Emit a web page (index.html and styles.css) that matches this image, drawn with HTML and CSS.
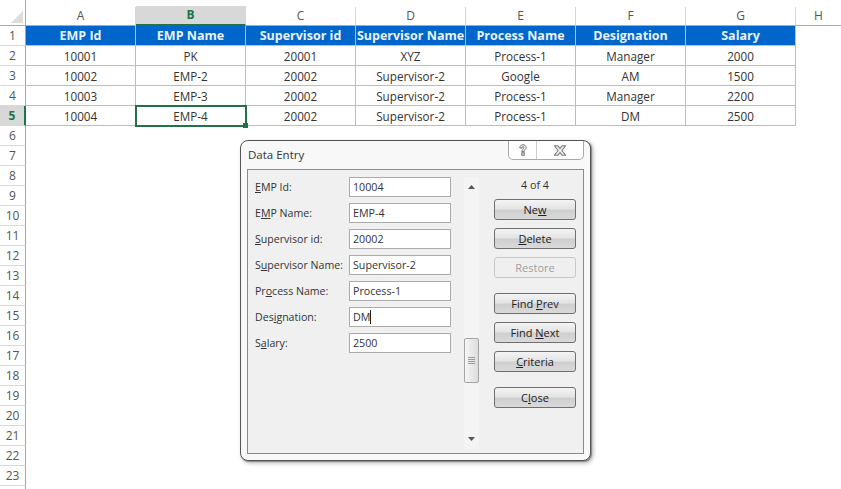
FILE: index.html
```html
<!DOCTYPE html>
<html lang="en">
<head>
<meta charset="utf-8">
<title>Data Entry</title>
<link rel="stylesheet" href="styles.css">
</head>
<body>
<div class="sheet">
  <div class="corner"><svg width="14" height="14" viewBox="0 0 14 14"><path d="M1 13H13V1Z" fill="#dcdcdc"/></svg></div>
  <div class="ch">A</div><div class="ch sel">B</div><div class="ch">C</div><div class="ch">D</div><div class="ch">E</div><div class="ch">F</div><div class="ch">G</div><div class="ch last">H</div>

  <div class="rh">1</div>
  <div class="th">EMP Id</div><div class="th">EMP Name</div><div class="th">Supervisor id</div><div class="th">Supervisor Name</div><div class="th">Process Name</div><div class="th">Designation</div><div class="th">Salary</div><div class="gap"></div>

  <div class="rh">2</div>
  <div class="td">10001</div><div class="td">PK</div><div class="td">20001</div><div class="td">XYZ</div><div class="td">Process-1</div><div class="td">Manager</div><div class="td">2000</div><div class="gap"></div>

  <div class="rh">3</div>
  <div class="td">10002</div><div class="td">EMP-2</div><div class="td">20002</div><div class="td">Supervisor-2</div><div class="td">Google</div><div class="td">AM</div><div class="td">1500</div><div class="gap"></div>

  <div class="rh">4</div>
  <div class="td">10003</div><div class="td">EMP-3</div><div class="td">20002</div><div class="td">Supervisor-2</div><div class="td">Process-1</div><div class="td">Manager</div><div class="td">2200</div><div class="gap"></div>

  <div class="rh sel-row">5</div>
  <div class="td">10004</div><div class="td active">EMP-4<span class="handle"></span></div><div class="td">20002</div><div class="td">Supervisor-2</div><div class="td">Process-1</div><div class="td">DM</div><div class="td">2500</div><div class="gap"></div>

  <div class="rh">6</div><div class="rh">7</div><div class="rh">8</div><div class="rh">9</div><div class="rh">10</div><div class="rh">11</div><div class="rh">12</div><div class="rh">13</div><div class="rh">14</div><div class="rh">15</div><div class="rh">16</div><div class="rh">17</div><div class="rh">18</div><div class="rh">19</div><div class="rh">20</div><div class="rh">21</div><div class="rh">22</div><div class="rh">23</div><div class="rh"></div>
</div>

<div class="dialog">
  <div class="titlebar">
    <span class="title">Data Entry</span>
    <div class="winbtns">
      <div class="winbtn help">
        <svg width="8" height="12" viewBox="0 0 10 14" fill="none" stroke="#666" stroke-width="1.200"><path d="M1 4.500C1 2 2.800 .5 5 .5S9 2 9 4C9 6 6.500 6.500 6.500 9H3.500C3.500 6.500 6 5.500 6 4C6 3 5.500 2.600 5 2.600S3.900 3.100 3.900 4.500Z"/><rect x="3.500" y="10.500" width="3" height="3"/></svg>
      </div>
      <div class="winbtn close">
        <svg width="12" height="11" viewBox="0 0 14 12" fill="#eee" stroke="#777" stroke-width="1.200"><path d="M.5 .5H4.500L7 3.500L9.500 .5H13.500L9.300 6L13.500 11.500H9.500L7 8.500L4.500 11.500H.5L4.700 6Z"/></svg>
      </div>
    </div>
  </div>
  <div class="panel">
    <div class="fields">
      <div class="field"><label><u>E</u>MP Id:</label><div class="input">10004</div></div>
      <div class="field"><label>E<u>M</u>P Name:</label><div class="input">EMP-4</div></div>
      <div class="field"><label><u>S</u>upervisor id:</label><div class="input">20002</div></div>
      <div class="field"><label>S<u>u</u>pervisor Name:</label><div class="input">Supervisor-2</div></div>
      <div class="field"><label>Pr<u>o</u>cess Name:</label><div class="input">Process-1</div></div>
      <div class="field"><label>Des<u>i</u>gnation:</label><div class="input">DM<span class="caret"></span></div></div>
      <div class="field"><label>S<u>a</u>lary:</label><div class="input">2500</div></div>
    </div>
    <div class="scrollbar">
      <svg class="arrow" width="7" height="4" viewBox="0 0 7 4"><path d="M0 4L3.500 0L7 4Z" fill="#555"/></svg>
      <div class="thumb"><svg width="7" height="8" viewBox="0 0 7 8"><path d="M0 .5H7M0 2.500H7M0 4.500H7M0 6.500H7" stroke="#9a9a9a" stroke-width="1"/></svg></div>
      <svg class="arrow" width="7" height="4" viewBox="0 0 7 4"><path d="M0 0L3.500 4L7 0Z" fill="#555"/></svg>
    </div>
    <div class="actions">
      <div class="count">4 of 4</div>
      <div class="btn">Ne<u>w</u></div>
      <div class="btn"><u>D</u>elete</div>
      <div class="btn off">Restore</div>
      <div class="btn spaced">Find <u>P</u>rev</div>
      <div class="btn">Find <u>N</u>ext</div>
      <div class="btn"><u>C</u>riteria</div>
      <div class="btn spaced">C<u>l</u>ose</div>
    </div>
  </div>
</div>
</body>
</html>
```
FILE: styles.css
```css
* { box-sizing: border-box; }
html, body { margin: 0; height: 100%; }
body {
  background: #fff;
  overflow: hidden;
  font-family: "Open Sans", "Liberation Sans", sans-serif;
  color: #333;
}
.sheet {
  display: grid;
  grid-template-columns: 26px repeat(7, 110px) 45px;
  grid-auto-rows: 20px;
  grid-template-rows: 26px;
}
.corner {
  padding: 11px 0 0 10px;
  border-right: 1px solid #aaa;
  border-bottom: 1px solid #aaa;
  line-height: 0;
}
.corner svg { margin: -1px 0 0 0; }
.ch {
  margin-top: 7px;
  border-right: 1px solid #d6d6d6;
  border-bottom: 1px solid #aaa;
  text-align: center;
  font-size: 12px;
  line-height: 18px;
  color: #555;
}
.ch.last { border-right: 0; }
.ch.sel {
  background: #d8d8d8;
  border-bottom: 2px solid #217346;
  color: #217346;
  font-weight: 700;
  margin-top: 6px;
  line-height: 18px;
}
.rh {
  grid-column: 1;
  border-right: 1px solid #a5a5a5;
  border-bottom: 1px solid #d8d8d8;
  text-align: center;
  font-size: 12px;
  line-height: 19px;
  color: #555;
}
.rh.sel-row {
  background: #d8d8d8;
  border-right: 2px solid #217346;
  color: #217346;
  font-weight: 700;
}
.th {
  background: #0066cc;
  border-right: 1px solid #a9c6e6;
  border-bottom: 1px solid #a9c6e6;
  color: #e9f2fb;
  text-align: center;
  white-space: nowrap;
  font-size: 12.500px;
  font-weight: 700;
  line-height: 20px;
}
.td {
  position: relative;
  border-right: 1px solid #bcbcbc;
  border-bottom: 1px solid #bcbcbc;
  text-align: center;
  font-size: 11.700px;
  line-height: 20px;
  color: #333;
}
.td.active {
  outline: 2px solid #217346;
  outline-offset: -1px;
  z-index: 1;
}
.handle {
  position: absolute;
  right: -3px;
  bottom: -3px;
  width: 5px;
  height: 5px;
  background: #217346;
  border: 0;
}
.dialog {
  position: absolute;
  left: 240px;
  top: 140px;
  width: 351px;
  height: 321px;
  display: flex;
  flex-direction: column;
  padding: 0 6px 6px 6px;
  background: #f8f8f8;
  border: 1px solid #555;
  border-radius: 8px;
  box-shadow: 1px 1px 1px #888, 2px 2px 4px rgba(0, 0, 0, .3);
}
.titlebar {
  display: flex;
  justify-content: space-between;
  height: 28px;
  flex: none;
}
.title {
  padding: 6px 0 0 1px;
  font-size: 11.500px;
  line-height: 16px;
  color: #333;
}
.winbtns {
  display: flex;
  height: 19px;
  border: 1px solid #aaa;
  border-top: 0;
  border-radius: 0 0 5px 5px;
  background: #fff;
}
.winbtn {
  display: flex;
  align-items: center;
  justify-content: center;
}
.winbtn.help { width: 28px; border-right: 1px solid #ccc; }
.winbtn.close { width: 46px; }
.panel {
  flex: 1;
  display: flex;
  background: #f0f0f0;
  border: 1px solid #8a8a8a;
}
.fields {
  width: 216px;
  flex: none;
  display: flex;
  flex-direction: column;
  gap: 6px;
  padding-top: 7px;
}
.field { display: flex; align-items: center; height: 20px; }
label {
  width: 101px;
  padding-left: 7px;
  flex: none;
  font-size: 10.600px;
  color: #333;
  white-space: nowrap;
}
.input {
  width: 102px;
  height: 20px;
  padding-left: 3px;
  background: #fff;
  border: 1px solid #ababab;
  font-size: 10.700px;
  line-height: 18px;
  color: #333;
}
.caret {
  display: inline-block;
  width: 1px;
  height: 14px;
  background: #222;
  vertical-align: -3px;
}
.scrollbar {
  width: 15px;
  margin: 7px 0 4px 0;
  flex: none;
  display: flex;
  flex-direction: column;
  align-items: center;
  background: #f4f4f4;
  position: relative;
  padding: 8px 0;
  justify-content: space-between;
}
.thumb {
  position: absolute;
  left: 0;
  top: 161px;
  width: 15px;
  height: 45px;
  display: flex;
  align-items: center;
  justify-content: center;
  background: linear-gradient(90deg, #f6f6f6, #dcdcdc);
  border: 1px solid #a5a5a5;
  border-radius: 2px;
}
.actions {
  margin-left: 15px;
  width: 82px;
  flex: none;
  display: flex;
  flex-direction: column;
  gap: 8px;
  padding-top: 8px;
}
.count {
  height: 13px;
  text-align: center;
  font-size: 10.700px;
  line-height: 14px;
  color: #333;
}
.btn {
  height: 21px;
  background: linear-gradient(#f4f4f4 0%, #e4e4e4 45%, #cfcfcf 55%, #dadada 100%);
  border: 1px solid #6f6f6f;
  border-radius: 3px;
  text-align: center;
  font-size: 11px;
  line-height: 19px;
  color: #222;
}
.btn.off {
  background: #efefef;
  border-color: #c8c8c8;
  color: #a0a0a0;
}
.btn.spaced { margin-top: 7px; }
```
